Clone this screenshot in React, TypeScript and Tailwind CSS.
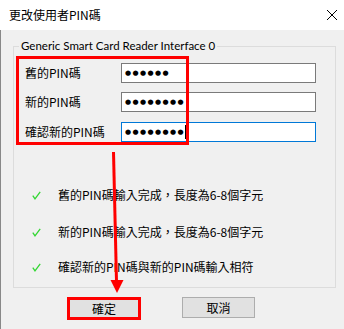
const cjk = { fontFamily: '"Noto Sans CJK TC", "Noto Sans", sans-serif' };
const latin = { fontFamily: 'Lato, "Noto Sans", "Noto Sans CJK TC", sans-serif' };

function Check() {
  return (
    <svg width="9" height="9" viewBox="0 0 9 9" className="shrink-0">
      <path d="M0.8 4.6 L3 7.8 L8.2 0.8" fill="none" stroke="#33d633" strokeWidth="1.3" />
    </svg>
  );
}

function PinRow({ label, dots, active }: { label: string; dots: number; active?: boolean }) {
  return (
    <div className="flex items-center h-[20px]">
      <span className="w-[96px] text-[12px] leading-none text-black">{label}</span>
      <div
        className={`w-[195px] h-[20px] bg-white border flex items-center pl-[3px] ${
          active ? 'border-[#0078d7]' : 'border-[#7a7a7a]'
        }`}
      >
        <span className="text-[7px] tracking-[1.4px] text-black" style={{ fontFamily: '"DejaVu Sans", sans-serif' }}>
          {'●'.repeat(dots)}
        </span>
        {active && <span className="w-px h-[14px] bg-black" />}
      </div>
    </div>
  );
}

function Status({ text }: { text: string }) {
  return (
    <div className="flex items-center h-[20px] pl-[18px]">
      <Check />
      <span className="ml-[17px] text-[12px] leading-none text-black">{text}</span>
    </div>
  );
}

export default function App() {
  return (
    <div className="relative w-[344px] h-[329px] overflow-hidden bg-white flex flex-col" style={cjk}>
      <div className="h-[30px] flex items-center justify-between pl-[9px] pr-[7px] bg-white">
        <span className="text-[12px] text-black">更改使用者PIN碼</span>
        <svg width="10" height="10" viewBox="0 0 10 10">
          <path d="M0 0 L10 10 M10 0 L0 10" stroke="#000" strokeWidth="1" />
        </svg>
      </div>

      <div className="flex-1 bg-[#f0f0f0] border-l border-[#888] pl-[12px] pt-[16px]">
        <div className="relative w-[323px] h-[242px] border border-[#dcdcdc] pt-[16px] pl-[11px]">
          <span
            className="absolute left-[5px] top-[-9px] px-[2px] bg-[#f0f0f0] text-[11.5px] leading-[16px] text-black"
            style={latin}
          >
            Generic Smart Card Reader Interface 0
          </span>
          <div className="flex flex-col">
            <PinRow label="舊的PIN碼" dots={6} />
            <div className="mt-[9px]">
              <PinRow label="新的PIN碼" dots={8} />
            </div>
            <div className="mt-[10px]">
              <PinRow label="確認新的PIN碼" dots={8} active />
            </div>
          </div>
          <div className="flex flex-col mt-[43px] -ml-[11px]">
            <Status text="舊的PIN碼輸入完成，長度為6-8個字元" />
            <div className="mt-[17px]">
              <Status text="新的PIN碼輸入完成，長度為6-8個字元" />
            </div>
            <div className="mt-[15px]">
              <Status text="確認新的PIN碼與新的PIN碼輸入相符" />
            </div>
          </div>
        </div>

        <div className="flex items-start mt-[9px] pl-[54px]">
          <button className="w-[74px] h-[23px] bg-[#e1e1e1] border-[3px] border-[#ff0000] text-[12px] leading-none text-black">
            確定
          </button>
          <button className="ml-[41px] w-[73px] h-[21px] bg-[#e1e1e1] border border-[#adadad] text-[12px] leading-none text-black">
            取消
          </button>
        </div>
      </div>

      {/* annotation overlay */}
      <div className="absolute left-[16px] top-[56px] w-[173px] h-[89px] border-[3px] border-[#ff0000] pointer-events-none" />
      <svg className="absolute left-0 top-0 pointer-events-none" width="344" height="329" viewBox="0 0 344 329">
        <path d="M113.5 152 L116.5 282" stroke="#ff0000" strokeWidth="3" />
        <path d="M110.5 280 L123.5 280 L117 293 Z" fill="#ff0000" />
      </svg>
    </div>
  );
}
